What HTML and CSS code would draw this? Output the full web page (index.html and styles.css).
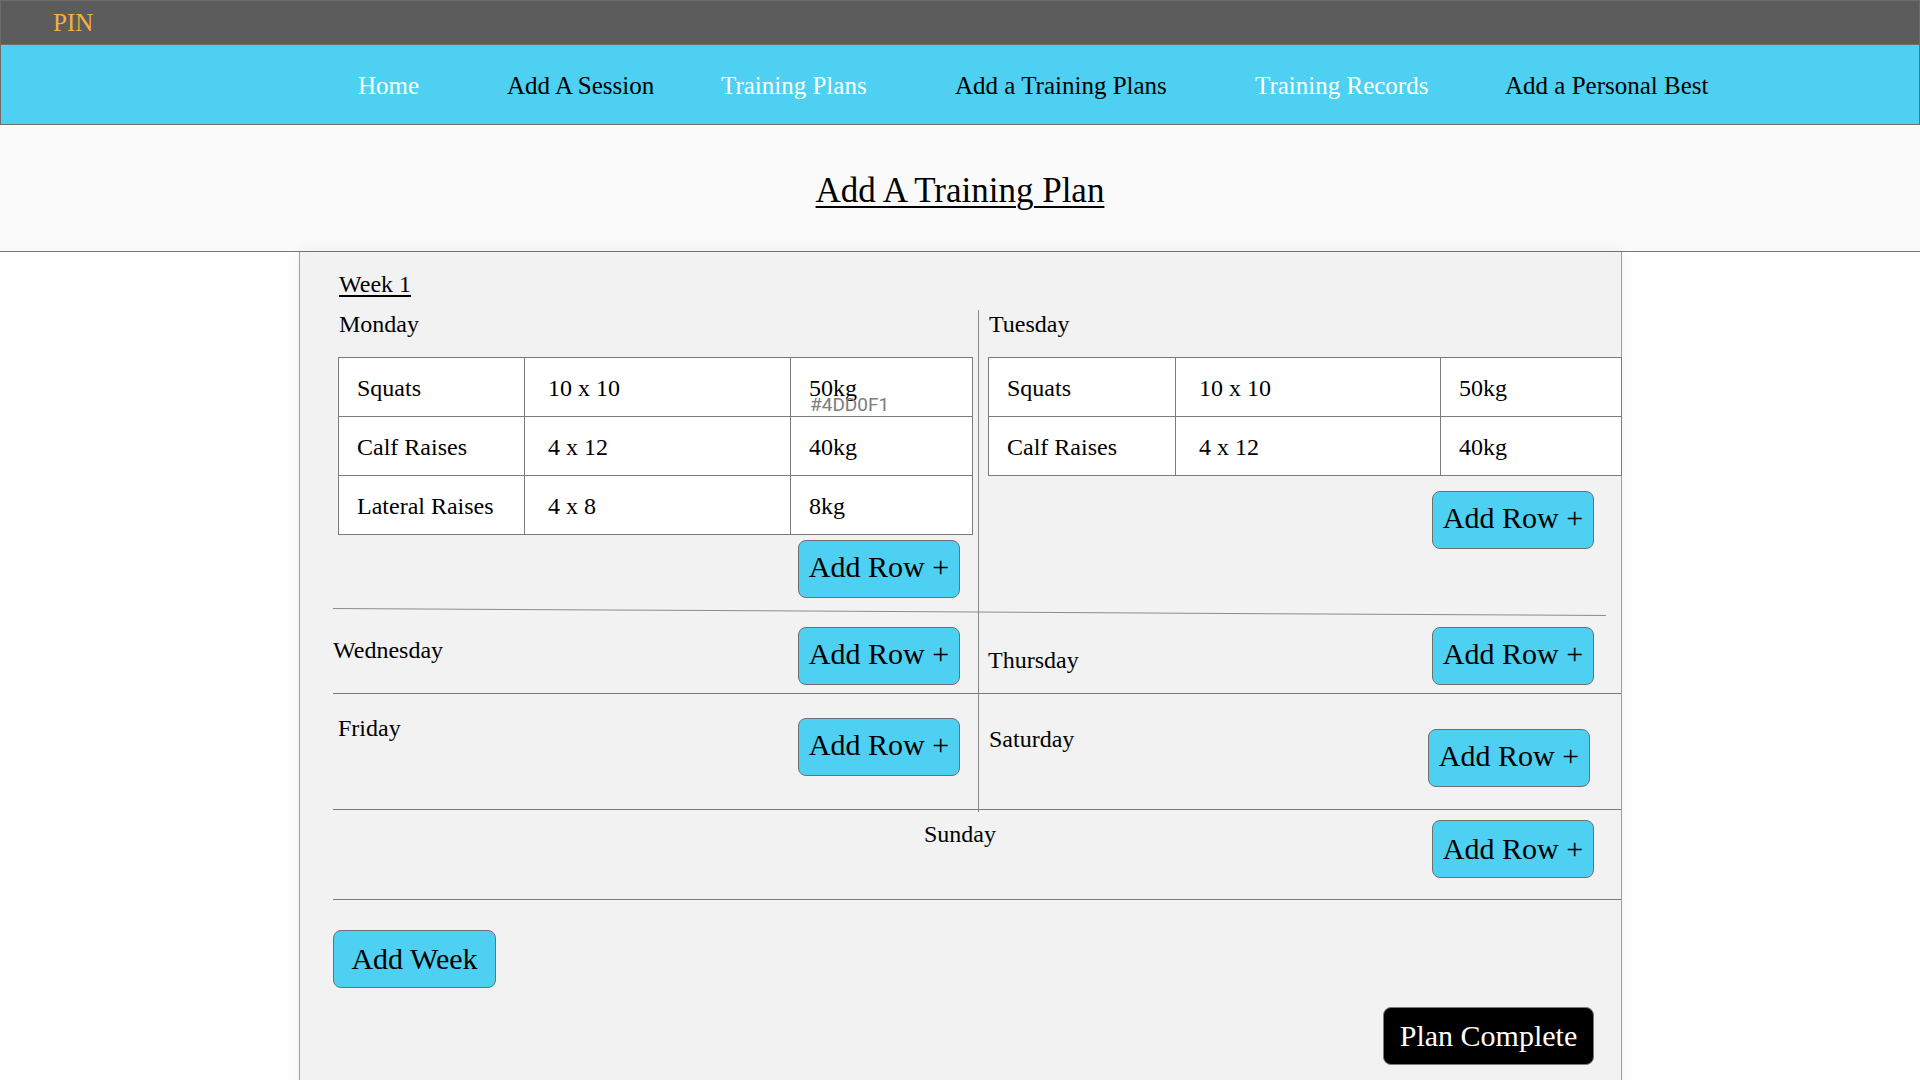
FILE: index.html
```html
<!DOCTYPE html>
<html lang="en">
<head>
<meta charset="utf-8">
<title>Add A Training Plan</title>
<link rel="stylesheet" href="styles.css">
</head>
<body>
<div class="topbar"><span class="logo">PIN</span></div>
<nav class="nav">
  <a class="nav-item light n1">Home</a>
  <a class="nav-item n2">Add A Session</a>
  <a class="nav-item light n3">Training Plans</a>
  <a class="nav-item n4">Add a Training Plans</a>
  <a class="nav-item light n5">Training Records</a>
  <a class="nav-item n6">Add a Personal Best</a>
</nav>
<header class="page-head"><h1 class="page-title">Add A Training Plan</h1></header>
<main class="panel">
  <div class="week-title">Week 1</div>
  <div class="days">
    <section class="day mon">
      <div class="day-name">Monday</div>
      <table class="ex-table">
        <colgroup><col class="w1"><col class="w2"><col class="w3"></colgroup>
        <tr><td>Squats</td><td class="c2">10 x 10</td><td><div class="cell-wrap">50kg<span class="swatch-label">#4DD0F1</span></div></td></tr>
        <tr><td>Calf Raises</td><td class="c2">4 x 12</td><td>40kg</td></tr>
        <tr><td>Lateral Raises</td><td class="c2">4 x 8</td><td>8kg</td></tr>
      </table>
      <button class="btn add-row">Add Row +</button>
    </section>
    <div class="vdiv"></div>
    <section class="day tue">
      <div class="day-name">Tuesday</div>
      <table class="ex-table tbl-tue">
        <colgroup><col class="t1"><col class="t2"><col class="t3"></colgroup>
        <tr><td>Squats</td><td class="c2">10 x 10</td><td>50kg</td></tr>
        <tr><td>Calf Raises</td><td class="c2">4 x 12</td><td>40kg</td></tr>
      </table>
      <button class="btn add-row">Add Row +</button>
    </section>
    <div class="hline slant r2"></div>
    <section class="day wed">
      <div class="day-name">Wednesday</div>
      <button class="btn add-row">Add Row +</button>
    </section>
    <section class="day thu">
      <div class="day-name">Thursday</div>
      <button class="btn add-row">Add Row +</button>
    </section>
    <div class="hline r4"></div>
    <section class="day fri">
      <div class="day-name">Friday</div>
      <button class="btn add-row">Add Row +</button>
    </section>
    <section class="day sat">
      <div class="day-name">Saturday</div>
      <button class="btn add-row">Add Row +</button>
    </section>
    <div class="hline r6"></div>
  </div>
  <section class="sunday">
    <div class="day-name">Sunday</div>
    <button class="btn add-row">Add Row +</button>
  </section>
  <div class="actions">
    <button class="btn add-week">Add Week</button>
    <button class="btn plan-complete">Plan Complete</button>
  </div>
</main>
</body>
</html>
```
FILE: styles.css
```css
* { box-sizing: border-box; }
html, body { margin: 0; padding: 0; }
body {
  background: #ffffff;
  font-family: "Liberation Serif", "Times New Roman", serif;
  color: #000;
}

.topbar {
  height: 45px;
  background: #5c5c5c;
  border: 1px solid #6c6c6c;
  border-bottom-color: #6e6e6e;
  display: flex;
  align-items: center;
  padding-left: 52px;
}
.logo {
  font-size: 25px;
  color: #f3b03e;
}

.nav {
  height: 80px;
  background: #4dd0f1;
  border: 1px solid #6e6e6e;
  border-top: none;
  display: flex;
  align-items: center;
  padding-left: 357px;
  padding-top: 2px;
}
.nav-item {
  font-size: 25px;
  color: #000;
  text-decoration: none;
  white-space: nowrap;
}
.nav-item.light { color: #fff; }
.n1 { width: 149px; }
.n2 { width: 214px; }
.n3 { width: 234px; }
.n4 { width: 300px; }
.n5 { width: 250px; }

.page-head {
  height: 127px;
  background: #fafafa;
  border-bottom: 1px solid #757575;
  padding-top: 46px;
  text-align: center;
}
.page-title {
  margin: 0;
  font-size: 35px;
  font-weight: normal;
  text-decoration: underline;
  text-decoration-thickness: 2px;
  text-underline-offset: 4px;
}

.panel {
  width: 1323px;
  margin-left: 299px;
  background: #f2f2f2;
  border-left: 1px solid #a0a0a0;
  border-right: 1px solid #a0a0a0;
  box-shadow: 0 0 14px rgba(0, 0, 0, 0.07);
  padding: 18px 0 24px 33px;
}

.week-title {
  font-size: 24px;
  line-height: 28px;
  padding-left: 6px;
  text-decoration: underline;
  text-underline-offset: 3px;
  margin-bottom: 12px;
}

.day-name {
  font-size: 24px;
  line-height: 28px;
  white-space: nowrap;
}

.days {
  display: grid;
  grid-template-columns: 645px 1px 642px;
  grid-template-rows: 298px 1px 84px 1px 115px 1px;
}
.vdiv {
  grid-column: 2;
  grid-row: 1 / 6;
  background: #8a8a8a;
  margin-bottom: -3px;
}
.hline {
  grid-column: 1 / -1;
  background: #7a7a7a;
  height: 1px;
}
.hline.slant {
  width: 1273px;
  background: #8c8c8c;
  transform: rotate(0.315deg);
  transform-origin: 0 0;
}
.r2 { grid-row: 2; }
.r4 { grid-row: 4; }
.r6 { grid-row: 6; }

.day { display: flex; }
.mon, .tue { flex-direction: column; }
.mon { grid-column: 1; grid-row: 1; }
.tue { grid-column: 3; grid-row: 1; }
.wed { grid-column: 1; grid-row: 3; }
.thu { grid-column: 3; grid-row: 3; }
.fri { grid-column: 1; grid-row: 5; }
.sat { grid-column: 3; grid-row: 5; }
.wed, .thu, .fri, .sat {
  justify-content: space-between;
  align-items: flex-start;
}

.mon .day-name { padding-left: 6px; }
.mon .ex-table { margin: 19px 0 0 5px; width: 634px; }
.mon .btn { align-self: flex-end; margin: 5px 18px 0 0; }

.tue .day-name { padding-left: 10px; }
.tue .ex-table { margin: 19px 0 0 9px; width: 633px; }
.tue .btn { align-self: flex-end; margin: 15px 27px 0 0; }

.wed .day-name { margin-top: 27px; }
.wed .btn { margin: 18px 18px 0 0; }
.thu .day-name { margin-top: 37px; padding-left: 9px; }
.thu .btn { margin: 18px 27px 0 0; }
.fri .day-name { margin-top: 20px; padding-left: 5px; }
.fri .btn { margin: 24px 18px 0 0; }
.sat .day-name { margin-top: 31px; padding-left: 10px; }
.sat .btn { margin: 35px 31px 0 0; }

.ex-table {
  border-collapse: collapse;
  table-layout: fixed;
  background: #fff;
}
.w1 { width: 186px; }
.w2 { width: 266px; }
.w3 { width: 182px; }
.t1 { width: 187px; }
.t2 { width: 265px; }
.t3 { width: 181px; }
.ex-table tr { height: 59px; }
.ex-table td {
  border: 1px solid #7b7b7b;
  font-size: 24px;
  padding: 2px 0 0 18px;
  vertical-align: middle;
  white-space: nowrap;
}
.ex-table td.c2 { padding-left: 23px; }

.cell-wrap { position: relative; }
.swatch-label {
  position: absolute;
  left: 1px;
  top: 20px;
  font-family: Roboto, "Liberation Sans", sans-serif;
  font-size: 19px;
  line-height: 19px;
  color: #7d7d7d;
}

.sunday {
  height: 90px;
  border-bottom: 1px solid #7a7a7a;
  display: flex;
  align-items: flex-start;
  justify-content: space-between;
  padding-left: 591px;
}
.sunday .day-name { margin-top: 10px; }
.sunday .btn { margin: 10px 27px 0 0; padding-bottom: 0; }

.btn {
  height: 58px;
  border: 1px solid #6f6f6f;
  border-radius: 8px;
  background: #4dd0f1;
  color: #000;
  font-family: "Liberation Serif", "Times New Roman", serif;
  font-size: 30px;
  padding: 0 0 4px;
  white-space: nowrap;
  text-align: center;
}
.add-row { width: 162px; }

.actions {
  display: flex;
  flex-direction: column;
  align-items: flex-start;
  margin-top: 30px;
}
.add-week { width: 163px; padding-bottom: 0; }
.plan-complete {
  width: 211px;
  align-self: flex-end;
  margin: 19px 27px 0 0;
  padding-bottom: 0;
  background: #000;
  color: #fff;
  border-color: #7a7a7a;
}
```
